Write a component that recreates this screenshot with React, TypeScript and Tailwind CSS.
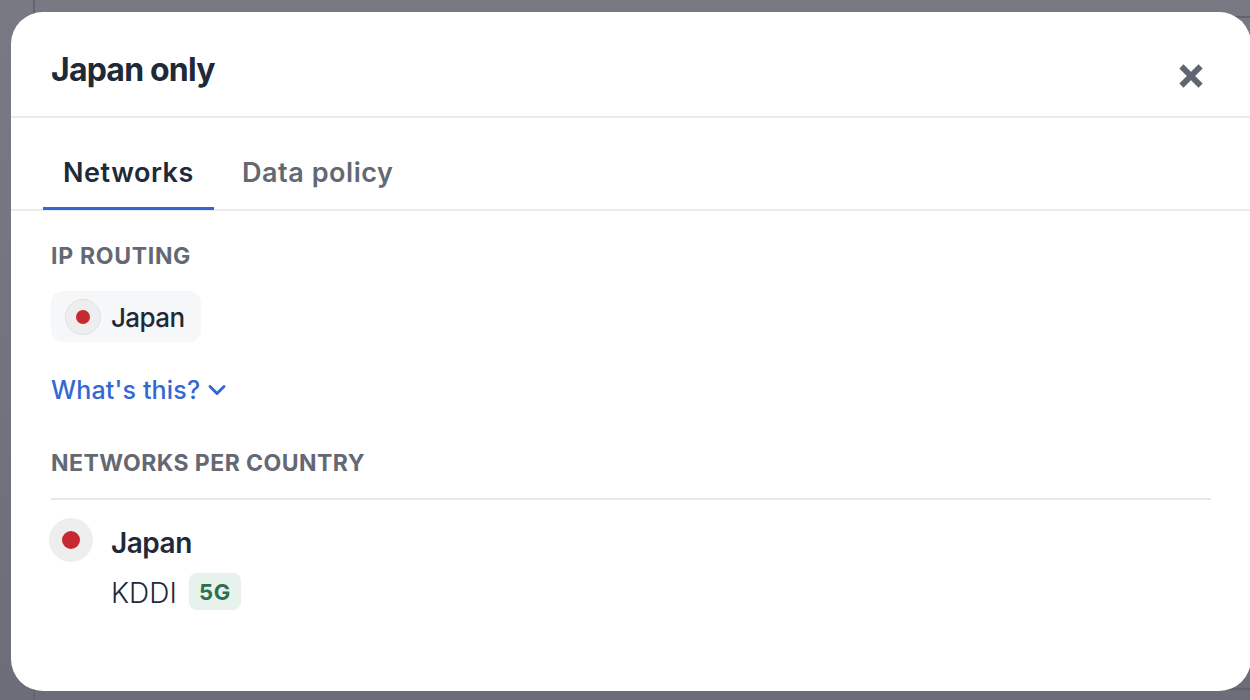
import { ChevronDown } from "lucide-react";

function JapanFlag({ large = false }: { large?: boolean }) {
  return large ? (
    <span className="flex size-11 shrink-0 items-center justify-center rounded-full bg-[#eeeeee]">
      <span className="size-[18px] rounded-full bg-[#c62a30]" />
    </span>
  ) : (
    <span className="flex size-9 shrink-0 items-center justify-center rounded-full border border-[#dfe1e3] bg-[#eeeeee]">
      <span className="size-[14px] rounded-full bg-[#c62a30]" />
    </span>
  );
}

export default function App() {
  return (
    <div className="relative h-[700px] w-[1250px] overflow-hidden bg-linear-to-b from-[#787a83] to-[#6b6e79] pt-3 pl-[11px] font-['Inter',sans-serif] text-[#1f2937]">
      <div className="absolute top-0 left-[33px] h-full w-[2px] bg-[#62646e]" />
      <div className="absolute top-4 right-0 h-[2px] w-10 bg-[#62646c]" />
      <div className="absolute right-0 bottom-[10px] h-[2px] w-10 bg-[#5e606b]" />
      <section className="relative h-[679px] w-[1240px] rounded-[32px] bg-white">
        <header className="flex h-[106px] items-start justify-between border-b-2 border-[#ebebed] pt-[38px] pr-[48px] pl-10">
          <h1 className="text-[32px] leading-[40px] font-bold tracking-[-0.8px]">Japan only</h1>
          <button aria-label="Close" className="mt-[14px]">
            <svg width="24" height="24" viewBox="0 0 24 24" fill="none" stroke="#5f6571" strokeWidth="5.8">
              <path d="M2.4 2.4 21.6 21.6M21.6 2.4 2.4 21.6" />
            </svg>
          </button>
        </header>
        <nav className="flex h-[93px] items-end border-b-2 border-[#ebebed] pl-8 text-[27px] leading-[36px] font-semibold tracking-[0.55px]">
          <button className="-mb-px h-[56px] w-[171px] border-b-[3px] border-[#3367d6] pt-px pb-4 pl-5 text-left whitespace-nowrap">Networks</button>
          <button className="-mb-px h-[56px] pt-px pb-[19px] pl-7 text-left whitespace-nowrap text-[#646872]">Data policy</button>
        </nav>
        <div className="px-10 pt-[30px]">
          <h2 className="text-[23px] leading-[30px] font-bold tracking-[0.7px] whitespace-nowrap text-[#646872]">IP ROUTING</h2>
          <div className="mt-5 flex h-[51px] w-[150px] items-center rounded-xl bg-[#f5f7f9] pl-[14px]">
            <JapanFlag />
            <span className="ml-[10px] pt-[2px] text-[26px] leading-[32px] font-medium tracking-[-0.6px]">Japan</span>
          </div>
          <button className="mt-[32px] flex h-8 items-center text-[25px] leading-[32px] font-medium tracking-[0.17px] whitespace-nowrap text-[#3367d6]">
            What's this?
            <ChevronDown className="ml-[3px] size-7" strokeWidth={2.5} />
          </button>
          <h2 className="mt-[42px] text-[23px] leading-[30px] font-bold tracking-[0.45px] whitespace-nowrap text-[#646872]">NETWORKS PER COUNTRY</h2>
          <div className="mt-[20px] flex border-t-2 border-[#e6e7e9] pt-[18px]">
            <div className="-ml-[2px]">
              <JapanFlag large />
            </div>
            <div className="ml-[18px]">
              <h3 className="mt-[7px] text-[28px] leading-[36px] font-semibold tracking-[-0.5px]">Japan</h3>
              <div className="mt-[12px] flex h-[37px] items-center">
                <span className="w-[78px] pt-[3px] text-[28px] leading-[36px] font-light">KDDI</span>
                <span className="flex h-[37px] w-[52px] items-center justify-center rounded-lg bg-[#e6f2eb] pt-px text-[22px] font-bold tracking-[0.7px] text-[#2f6f4d]">5G</span>
              </div>
            </div>
          </div>
        </div>
      </section>
    </div>
  );
}
